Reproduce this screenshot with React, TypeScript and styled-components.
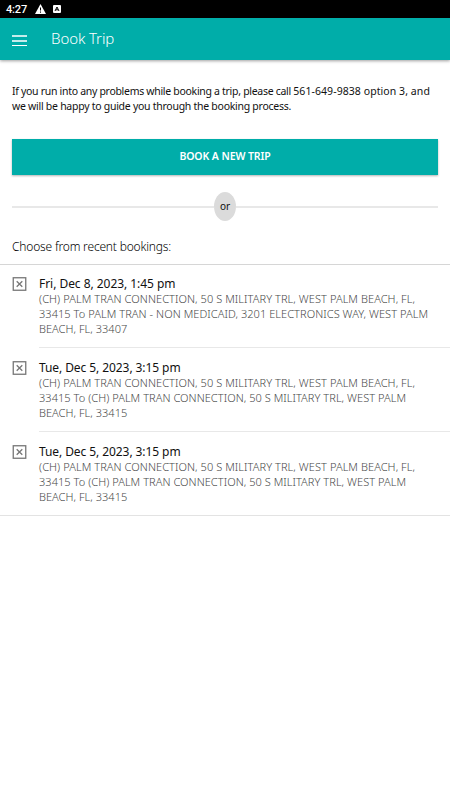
import React from "react";
import styled, { createGlobalStyle } from "styled-components";

const Global = createGlobalStyle`
  * { box-sizing: border-box; }
  body { margin: 0; background: #fff; color: #111; font-family: "Noto Sans", sans-serif; }
`;
const Page = styled.div`width: 450px; height: 800px; overflow: hidden; background: #fff;`;
const StatusBar = styled.div`
  display: flex; align-items: center; height: 18px; padding-left: 6px;
  background: #000; color: #fff; font: 500 11px/18px Roboto, sans-serif;
`;
const Clock = styled.span`width: 29px; padding-top: 1px; letter-spacing: -0.15px;`;
const StatusIcon = styled.svg`display: block; margin-right: 6px;`;
const AppBar = styled.header`
  display: flex; align-items: center; height: 42px; padding-left: 12px;
  background: #00ada9; color: #fff; box-shadow: 0 1px 3px rgba(0, 0, 0, 0.38);
`;
const MenuButton = styled.button`
  display: grid; gap: 3px; width: 15px; padding: 0; margin: 2px 24px 0 0; border: 0; background: none;
`;
const MenuLine = styled.span`
  height: 2px; background: #c4eceb;
  &:last-child { height: 1px; background: #fff; }
`;
const Title = styled.h1`margin: -2px 0 0; font-size: 15px; font-weight: 350; line-height: 20px; letter-spacing: -0.1px;`;
const Content = styled.main`padding: 24px 12px 0;`;
const Intro = styled.p`margin: 0; font-size: 10.5px; line-height: 15px;`;
const Line = styled.span<{ $spacing?: number }>`
  display: block; width: max-content; white-space: nowrap; letter-spacing: ${(p) => p.$spacing ?? 0}px;
`;
const Contact = styled.span`letter-spacing: 0.07px;`;
const BookButton = styled.button`
  display: block; width: 426px; height: 36px; margin-top: 25px; padding: 0 0 2px; border: 0;
  background: #00ada9; color: #fff; font: 600 10.5px/34px "Noto Sans", sans-serif;
  letter-spacing: -0.1px; box-shadow: 0 1px 2px rgba(0, 0, 0, 0.3);
`;
const Divider = styled.div`
  display: flex; align-items: center; height: 31px; margin-top: 16px;
  &::before, &::after { content: ""; flex: 1; height: 2px; background: #e8e8e8; }
`;
const Or = styled.span`
  width: 22px; height: 29px; border-radius: 50%; background: #dbdbdb;
  font-size: 10px; line-height: 28px; text-align: center;
`;
const Subheading = styled.h2`margin: 16px 0 0; color: #000; font-size: 12px; font-weight: 350; line-height: 18px;`;
const List = styled.ul`
  margin: 8px 0 0; padding: 0; list-style: none; border-top: 1px solid #d6d6d6; border-bottom: 1px solid #e3e3e3;
`;
const Row = styled.li`
  display: flex; height: 84px; padding-left: 12px;
  &:first-child, &:last-child { height: 83px; }
  &:not(:first-child) { padding-top: 1px; }
`;
const Marker = styled.svg`display: block; flex: none; margin: 12px 12px 0 0;`;
const Details = styled.div`
  flex: 1; padding-top: 10px; border-bottom: 1px solid #e8e8e8;
  ${Row}:last-child & { border-bottom: 0; }
`;
const When = styled.div`height: 16px; font-size: 12px; line-height: 17px;`;
const Route = styled.div`color: #484848; font-size: 11px; font-weight: 325; line-height: 15px;`;

type Text = [string, number];
const first: Text = ["(CH) PALM TRAN CONNECTION, 50 S MILITARY TRL, WEST PALM BEACH, FL,", 0.07];
const toConnection: Text = ["33415 To (CH) PALM TRAN CONNECTION, 50 S MILITARY TRL, WEST PALM", 0.05];
const trips: { when: Text; lines: Text[] }[] = [
  { when: ["Fri, Dec 8, 2023, 1:45 pm", -0.04], lines: [first, ["33415 To PALM TRAN - NON MEDICAID, 3201 ELECTRONICS WAY, WEST PALM", 0.06], ["BEACH, FL, 33407", 0.04]] },
  { when: ["Tue, Dec 5, 2023, 3:15 pm", -0.08], lines: [first, toConnection, ["BEACH, FL, 33415", 0.04]] },
  { when: ["Tue, Dec 5, 2023, 3:15 pm", -0.08], lines: [first, toConnection, ["BEACH, FL, 33415", 0.04]] },
];

export default function App() {
  return (
    <Page>
      <Global />
      <StatusBar>
        <Clock>4:27</Clock>
        <StatusIcon width="11" height="10" viewBox="0 0 11 10"><path d="M5.5 0L11 10H0Z" fill="#fff" /><path d="M5.5 3.5V6.5M5.5 7.5V8.7" stroke="#000" /></StatusIcon>
        <StatusIcon width="9" height="8" viewBox="0 0 9 8"><rect x="1" width="8" height="8" rx="1" fill="#fff" /><path d="M3 6L5 2L7 6M4 4.8H6" fill="none" stroke="#000" /></StatusIcon>
      </StatusBar>
      <AppBar>
        <MenuButton aria-label="Menu"><MenuLine /><MenuLine /><MenuLine /></MenuButton>
        <Title>Book Trip</Title>
      </AppBar>
      <Content>
        <Intro>
          <Line $spacing={-0.3}>If you run into any problems while booking a trip, please call <Contact>561-649-9838 option 3, and</Contact></Line>
          <Line $spacing={-0.27}>we will be happy to guide you through the booking process.</Line>
        </Intro>
        <BookButton>BOOK A NEW TRIP</BookButton>
        <Divider><Or>or</Or></Divider>
        <Subheading><Line $spacing={-0.18}>Choose from recent bookings:</Line></Subheading>
      </Content>
      <List>
        {trips.map((trip, i) => (
          <Row key={i}>
            <Marker width="15" height="14" viewBox="-0.5 0 15 14" fill="none" stroke="#777"><rect x=".75" y=".75" width="12.5" height="12.5" strokeWidth="1.3" /><path d="M4.2 4.2L9.8 9.8M9.8 4.2L4.2 9.8" strokeWidth="1.3" /></Marker>
            <Details>
              <When><Line $spacing={trip.when[1]}>{trip.when[0]}</Line></When>
              <Route>{trip.lines.map(([text, spacing], n) => <Line key={n} $spacing={spacing}>{text}</Line>)}</Route>
            </Details>
          </Row>
        ))}
      </List>
    </Page>
  );
}
